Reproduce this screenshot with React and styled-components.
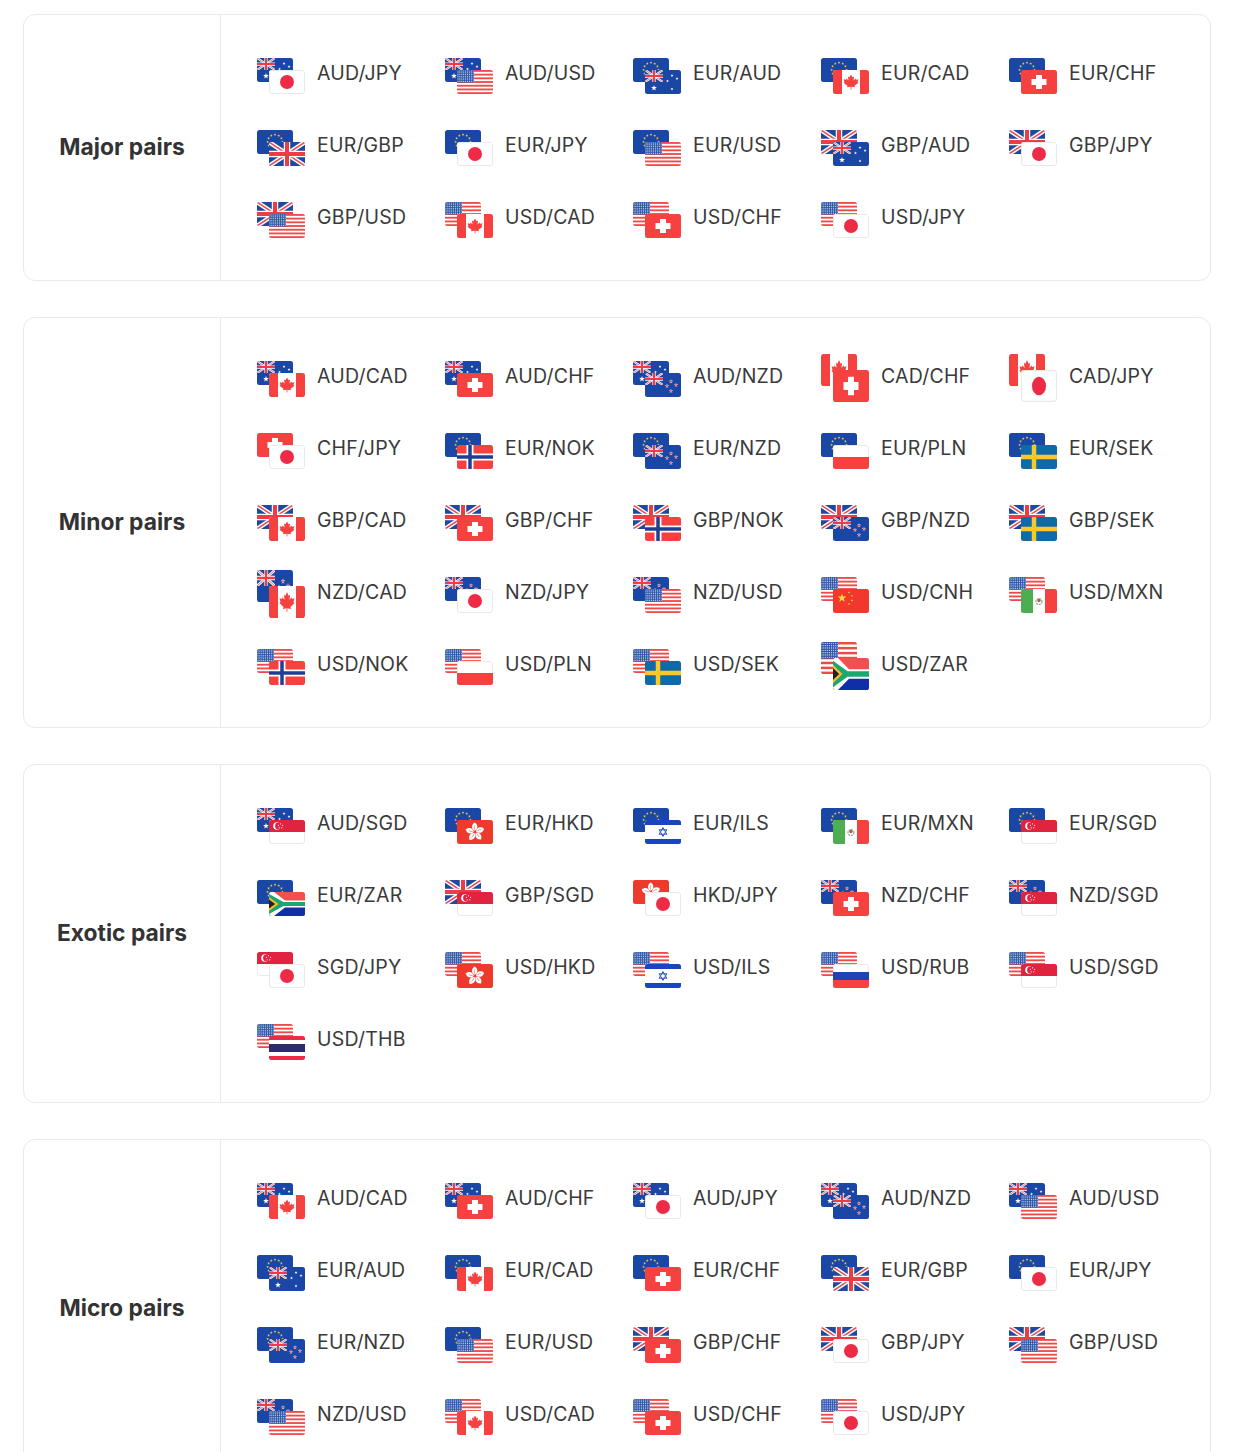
import React, { useId } from 'react';
import styled, { createGlobalStyle } from 'styled-components';

const GlobalStyle = createGlobalStyle`
  html, body {
    margin: 0;
    padding: 0;
    background: #fff;
  }
  body {
    font-family: Inter, "Noto Sans", "Liberation Sans", sans-serif;
    color: #333;
  }
`;

const sections = [
  {
    title: 'Major pairs',
    pairs: 'AUD/JPY AUD/USD EUR/AUD EUR/CAD EUR/CHF EUR/GBP EUR/JPY EUR/USD GBP/AUD GBP/JPY GBP/USD USD/CAD USD/CHF USD/JPY',
  },
  {
    title: 'Minor pairs',
    pairs: 'AUD/CAD AUD/CHF AUD/NZD CAD/CHF CAD/JPY CHF/JPY EUR/NOK EUR/NZD EUR/PLN EUR/SEK GBP/CAD GBP/CHF GBP/NOK GBP/NZD GBP/SEK NZD/CAD NZD/JPY NZD/USD USD/CNH USD/MXN USD/NOK USD/PLN USD/SEK USD/ZAR',
  },
  {
    title: 'Exotic pairs',
    pairs: 'AUD/SGD EUR/HKD EUR/ILS EUR/MXN EUR/SGD EUR/ZAR GBP/SGD HKD/JPY NZD/CHF NZD/SGD SGD/JPY USD/HKD USD/ILS USD/RUB USD/SGD USD/THB',
  },
  {
    title: 'Micro pairs',
    pairs: 'AUD/CAD AUD/CHF AUD/JPY AUD/NZD AUD/USD EUR/AUD EUR/CAD EUR/CHF EUR/GBP EUR/JPY EUR/NZD EUR/USD GBP/CHF GBP/JPY GBP/USD NZD/USD USD/CAD USD/CHF USD/JPY',
  },
];

// these few icons are taller in the original artwork
const tallPairs = ['CAD/CHF', 'CAD/JPY', 'NZD/CAD', 'USD/ZAR'];

const BLUE = '#1a47a5';
const RED = '#f5413f';
const LINE = '#e9e9e9';

const Union = ({ w = 36, h = 24 }) => (
  <svg x="0" y="0" width={w} height={h} viewBox="0 0 36 24" preserveAspectRatio="none">
    <rect width="36" height="24" fill="#1d4a9f" />
    <path d="M0 0L36 24M36 0L0 24" stroke="#fff" strokeWidth="4.4" />
    <path d="M0 0L36 24M36 0L0 24" stroke="#ee4a55" strokeWidth="1.5" />
    <path d="M18 0V24M0 12H36" stroke="#fff" strokeWidth="6.5" />
    <path d="M18 0V24M0 12H36" stroke="#ee3b45" strokeWidth="4" />
  </svg>
);

const Star = ({ x, y, r, fill }) => {
  const pts = [];
  for (let i = 0; i < 10; i++) {
    const a = (Math.PI / 5) * i - Math.PI / 2;
    const q = i % 2 ? r * 0.42 : r;
    pts.push(`${x + q * Math.cos(a)},${y + q * Math.sin(a)}`);
  }
  return <polygon points={pts.join(' ')} fill={fill} />;
};

const Leaf = ({ x, y, s }) => (
  <path
    transform={`translate(${x} ${y}) scale(${s})`}
    fill={RED}
    d="M0-6L1.2-3.8L2.4-4.4L2-1.2L3.6-2.8L4-1.8L6-2.2L5.2 0L6 .6L2.8 3L3.2 4.2L.3 3.8V6H-.3V3.8L-3.2 4.2L-2.8 3L-6 .6L-5.2 0L-6-2.2L-4-1.8L-3.6-2.8L-2-1.2L-2.4-4.4L-1.2-3.8Z"
  />
);

const Edge = () => (
  <rect x=".5" y=".5" width="35" height="23" rx="2.5" fill="none" stroke={LINE} />
);

const flags = {
  AUD: () => (
    <>
      <rect width="36" height="24" fill={BLUE} />
      <Union w={18} h={12} />
      <Star x={9} y={18} r={3} fill="#fff" />
      <Star x={27} y={5.5} r={1.5} fill="#fff" />
      <Star x={32} y={8.5} r={1.5} fill="#fff" />
      <Star x={22.5} y={11} r={1.5} fill="#fff" />
      <Star x={27} y={19} r={1.5} fill="#fff" />
    </>
  ),
  NZD: () => (
    <>
      <rect width="36" height="24" fill={BLUE} />
      <Union w={18} h={12} />
      {[[26, 8.5], [31, 12], [22, 13], [26, 18]].map(([x, y]) => (
        <g key={x + y}>
          <Star x={x} y={y} r={2.2} fill="#fff" />
          <Star x={x} y={y} r={1.5} fill="#ee3b45" />
        </g>
      ))}
    </>
  ),
  EUR: () => (
    <>
      <rect width="36" height="24" fill={BLUE} />
      {Array.from({ length: 12 }, (_, i) => {
        const a = (Math.PI / 6) * i;
        return (
          <Star key={i} x={18 + 7.4 * Math.cos(a)} y={12 + 7.4 * Math.sin(a)} r={1.4} fill="#e8cf4a" />
        );
      })}
    </>
  ),
  GBP: () => <Union />,
  USD: () => (
    <>
      <rect width="36" height="24" fill="#fff" />
      {Array.from({ length: 7 }, (_, i) => (
        <rect key={i} y={i * 3.7} width="36" height="1.85" fill="#ef4a4a" />
      ))}
      <rect width="17" height="12.500" fill="#2f58ac" />
      {Array.from({ length: 7 }, (_, r) =>
        Array.from({ length: 9 }, (_, c) => (
          <circle key={`${r}-${c}`} cx={1 + c * 1.9} cy={1 + r * 1.75} r=".5" fill="#e6ecf8" />
        ))
      )}
    </>
  ),
  JPY: () => (
    <>
      <rect width="36" height="24" fill="#fff" />
      <Edge />
      <circle cx="18" cy="12" r="7" fill="#ee2b47" />
    </>
  ),
  CAD: () => (
    <>
      <rect width="36" height="24" fill="#fff" />
      <rect width="9" height="24" fill={RED} />
      <rect x="27" width="9" height="24" fill={RED} />
      <Leaf x={18} y={12} s={1.25} />
    </>
  ),
  CHF: () => (
    <>
      <rect width="36" height="24" fill={RED} />
      <path d="M15 5H21V9H25.500V15H21V19H15V15H10.500V9H15Z" fill="#fff" />
    </>
  ),
  NOK: () => (
    <>
      <rect width="36" height="24" fill={RED} />
      <path d="M13 0V24M0 12H36" stroke="#fff" strokeWidth="7" />
      <path d="M13 0V24M0 12H36" stroke="#1c3f94" strokeWidth="3.500" />
    </>
  ),
  SEK: () => (
    <>
      <rect width="36" height="24" fill="#0f6ba8" />
      <path d="M13 0V24M0 12H36" stroke="#fcc72e" strokeWidth="4.500" />
    </>
  ),
  PLN: () => (
    <>
      <rect width="36" height="24" fill="#fff" />
      <Edge />
      <rect y="12" width="36" height="12" fill={RED} />
    </>
  ),
  RUB: () => (
    <>
      <rect width="36" height="24" fill="#fff" />
      <Edge />
      <rect y="8" width="36" height="8" fill="#1b45b0" />
      <rect y="16" width="36" height="8" fill={RED} />
    </>
  ),
  THB: () => (
    <>
      <rect width="36" height="24" fill="#ee2b47" />
      <rect y="4" width="36" height="16" fill="#fff" />
      <rect y="8" width="36" height="8" fill="#2d2a6e" />
    </>
  ),
  CNH: () => (
    <>
      <rect width="36" height="24" fill="#f2372c" />
      <Star x={9} y={9} r={4.6} fill="#fcd93a" />
      <Star x={16} y={3.5} r={1.3} fill="#fcd93a" />
      <Star x={19} y={7} r={1.3} fill="#fcd93a" />
      <Star x={19} y={11.5} r={1.3} fill="#fcd93a" />
      <Star x={16} y={15} r={1.3} fill="#fcd93a" />
    </>
  ),
  MXN: () => (
    <>
      <rect width="36" height="24" fill="#fff" />
      <rect width="12" height="24" fill="#4cae50" />
      <rect x="24" width="12" height="24" fill={RED} />
      <circle cx="18" cy="12.500" r="3" fill="none" stroke="#8fa884" strokeWidth="1.200" strokeDasharray="2 .8" />
      <circle cx="18" cy="11.500" r="1.700" fill="#a5604f" />
    </>
  ),
  ZAR: () => (
    <>
      <rect width="36" height="24" fill="#f0504f" />
      <rect y="12" width="36" height="12" fill="#0f2fa8" />
      <path d="M0 0H5L16 8.500H36V15.500H16L5 24H0Z" fill="#fff" />
      <path d="M0 2L14.500 10H36V14H14.500L0 22Z" fill="#1ba672" />
      <path d="M0 5L9.500 12L0 19Z" fill="#f6bd2b" />
      <path d="M0 7.500L6.200 12L0 16.500Z" fill="#222" />
    </>
  ),
  SGD: () => (
    <>
      <rect width="36" height="24" fill="#fff" />
      <Edge />
      <rect width="36" height="12" fill="#e0243f" />
      <circle cx="8" cy="6" r="3.800" fill="#fff" />
      <circle cx="9.500" cy="6" r="3.400" fill="#e0243f" />
      {[0, 1, 2, 3, 4].map((i) => {
        const a = (Math.PI * 2 * i) / 5 - Math.PI / 2;
        return <circle key={i} cx={11.5 + 2.2 * Math.cos(a)} cy={6 + 2.2 * Math.sin(a)} r=".6" fill="#fff" />;
      })}
    </>
  ),
  HKD: () => (
    <>
      <rect width="36" height="24" fill="#ee3a2c" />
      {[0, 72, 144, 216, 288].map((a) => (
        <g key={a} transform={`rotate(${a} 18 12)`}>
          <path d="M17.800 10.800C14.200 9.400 14 4.600 17.600 2.400C21.200 4.400 21.400 8.800 17.800 10.800Z" fill="#fff" />
          <path d="M17.700 9.500C17.200 8 17.200 6.800 17.600 5.500" stroke="#ee3a2c" strokeWidth=".5" fill="none" />
        </g>
      ))}
    </>
  ),
  ILS: () => (
    <>
      <rect width="36" height="24" fill="#fff" />
      <rect width="36" height="5" fill="#1b45c0" />
      <rect y="19" width="36" height="5" fill="#1b45c0" />
      <path
        d="M18 7.600L21.800 14.200H14.200ZM18 16.400L14.200 9.800H21.800Z"
        fill="none"
        stroke="#2a55c0"
        strokeWidth="1"
      />
    </>
  ),
};

function Flag({ code, x, y, height }) {
  const id = useId();
  const Art = flags[code];
  return (
    <svg x={x} y={y} width="36" height={height} viewBox="0 0 36 24" preserveAspectRatio="none">
      <clipPath id={id}>
        <rect width="36" height="24" rx="2.5" />
      </clipPath>
      <g clipPath={`url(#${id})`}>
        <Art />
      </g>
    </svg>
  );
}

function PairIcon({ pair }) {
  const [base, quote] = pair.split('/');
  const tall = tallPairs.includes(pair);
  const flagHeight = tall ? 32 : 24;
  const offset = tall ? 16 : 12;
  return (
    <IconBox $tall={tall} width="48" height={flagHeight + offset}>
      <Flag code={base} x={0} y={0} height={flagHeight} />
      <Flag code={quote} x={12} y={offset} height={flagHeight} />
    </IconBox>
  );
}

export default function App() {
  return (
    <>
      <GlobalStyle />
      <Page>
        {sections.map((section) => (
          <Card key={section.title}>
            <SectionName>{section.title}</SectionName>
            <PairGrid>
              {section.pairs.split(' ').map((pair) => (
                <Pair key={pair}>
                  <PairIcon pair={pair} />
                  <PairLabel>{pair}</PairLabel>
                </Pair>
              ))}
            </PairGrid>
          </Card>
        ))}
      </Page>
    </>
  );
}

const Page = styled.div`
  height: 1452px;
  overflow: hidden;
  box-sizing: border-box;
  padding: 14px 35px 0 23px;
  display: flex;
  flex-direction: column;
  gap: 36px;
`;

const Card = styled.section`
  flex: none;
  display: flex;
  border: 1px solid #e9e9e9;
  border-radius: 12px;
  background: #fff;
`;

const SectionName = styled.div`
  flex: none;
  width: 196px;
  display: flex;
  align-items: center;
  justify-content: center;
  border-right: 1px solid #e9e9e9;
  font-size: 22.8px;
  font-weight: 700;
  color: #333;
  padding-bottom: 3px;
  box-sizing: content-box;
`;

const PairGrid = styled.div`
  flex: 1;
  display: grid;
  grid-template-columns: repeat(5, 188px);
  grid-auto-rows: 48px;
  row-gap: 24px;
  padding: 37px 0 36px 36px;
`;

const Pair = styled.div`
  display: flex;
  align-items: center;
  gap: 12px;
`;

const IconBox = styled.svg`
  flex: none;
  display: block;
  margin-bottom: ${(props) => (props.$tall ? '2px' : '0')};
`;

const PairLabel = styled.span`
  font-size: 19.5px;
  letter-spacing: 0.2px;
  line-height: 28px;
  padding-bottom: 6px;
  color: #3a3a3a;
`;
